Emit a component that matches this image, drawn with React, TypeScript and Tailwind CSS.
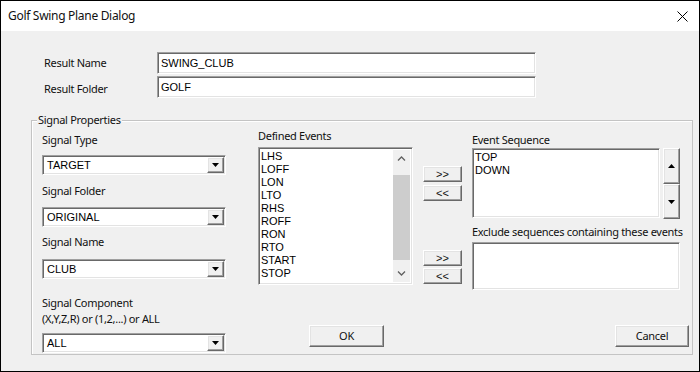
import React from "react";

const sunken =
  "bg-white border border-t-[#a0a0a0] border-l-[#a0a0a0] border-r-white border-b-white shadow-[inset_1px_1px_0_#696969,inset_-1px_-1px_0_#e3e3e3]";
const raised =
  "bg-[#f0f0f0] border border-t-white border-l-white border-r-[#696969] border-b-[#696969] shadow-[inset_-1px_-1px_0_#a0a0a0,inset_1px_1px_0_#e3e3e3]";
const field = "font-['Liberation_Sans',Arial,sans-serif] text-[11px] tracking-normal text-black";

function TriDown() {
  return (
    <svg width="7" height="4" viewBox="0 0 7 4">
      <path d="M0 0h7L3.5 4z" fill="#000" />
    </svg>
  );
}

function TriUp() {
  return (
    <svg width="7" height="4" viewBox="0 0 7 4">
      <path d="M0 4h7L3.5 0z" fill="#000" />
    </svg>
  );
}

function Combo({ value }: { value: string }) {
  return (
    <div className={`${sunken} flex h-[20px] w-[184px] items-center`}>
      <span className={`${field} flex-1 pl-[4px] leading-[16px]`}>{value}</span>
      <div className={`${raised} mr-[1px] flex h-[16px] w-[17px] items-center justify-center`}>
        <TriDown />
      </div>
    </div>
  );
}

function Btn({ label, w, h }: { label: string; w: string; h: string }) {
  return (
    <div className={`${raised} flex items-center justify-center ${w} ${h} text-[11px]`}>
      {label}
    </div>
  );
}

function Chevron({ up }: { up?: boolean }) {
  return (
    <svg width="9" height="5" viewBox="0 0 9 5">
      <path d={up ? "M1 4.5L4.5 1L8 4.5" : "M1 0.5L4.5 4L8 0.5"} stroke="#606060" strokeWidth="1.3" fill="none" />
    </svg>
  );
}

export default function App() {
  const events = ["LHS", "LOFF", "LON", "LTO", "RHS", "ROFF", "RON", "RTO", "START", "STOP", "TOP"];

  return (
    <div className="flex h-[372px] w-[700px] flex-col overflow-hidden border border-black bg-[#f0f0f0] font-['Noto_Sans',sans-serif] text-[11px] tracking-[-0.3px] text-[#111]">
      {/* TITLE BAR */}
      <div className="flex h-[30px] shrink-0 items-center justify-between bg-white pl-[7px] pr-[11px]">
        <span className="text-[12px]">Golf Swing Plane Dialog</span>
        <svg width="11" height="11" viewBox="0 0 11 11">
          <path d="M0.5 0.5L10.5 10.5M10.5 0.5L0.5 10.5" stroke="#000" strokeWidth="1" />
        </svg>
      </div>

      {/* CLIENT */}
      <div className="flex flex-col pt-[21px]">
        <div className="flex items-center pl-[43px]">
          <span className="w-[113px]">Result Name</span>
          <div className={`${sunken} flex h-[22px] w-[379px] items-center pl-[3px]`}>
            <span className={field}>SWING_CLUB</span>
          </div>
        </div>
        <div className="mt-[2px] flex items-start pl-[43px]">
          <span className="mt-[5px] w-[113px]">Result Folder</span>
          <div className={`${sunken} flex h-[22px] w-[379px] items-start pl-[3px] pt-[2px]`}>
            <span className={field}>GOLF</span>
          </div>
        </div>

        {/* SIGNAL PROPERTIES */}
        <div className="relative ml-[30px] mt-[22px] h-[235px] w-[662px] border border-[#c4c4c4] shadow-[inset_1px_1px_0_#fff]">
          <span className="absolute left-[5px] top-[-9px] bg-[#f0f0f0] px-[1px] leading-[16px]">Signal Properties</span>

          <div className="flex items-start pl-[10px]">
            {/* left column */}
            <div className="flex w-[184px] shrink-0 flex-col pt-[11px]">
              <span className="h-[16px] leading-[16px]">Signal Type</span>
              <div className="mt-[7px]"><Combo value="TARGET" /></div>
              <span className="mt-[8px] h-[16px] leading-[16px]">Signal Folder</span>
              <div className="mt-[8px]"><Combo value="ORIGINAL" /></div>
              <span className="mt-[7px] h-[16px] leading-[16px]">Signal Name</span>
              <div className="mt-[9px]"><Combo value="CLUB" /></div>
              <span className="mt-[16px] leading-[16px]">Signal Component</span>
              <span className="leading-[16px]">(X,Y,Z,R) or (1,2,...) or ALL</span>
              <div className="mt-[6px]"><Combo value="ALL" /></div>
            </div>

            {/* defined events */}
            <div className="ml-[32px] flex w-[155px] shrink-0 flex-col pt-[7px]">
              <span className="h-[16px] leading-[16px]">Defined Events</span>
              <div className={`${sunken} mt-[3px] flex h-[138px] p-[2px]`}>
                <div className={`${field} flex-1 overflow-hidden leading-[13px]`}>
                  {events.map((e) => (
                    <div key={e}>{e}</div>
                  ))}
                </div>
                <div className="flex w-[17px] flex-col bg-[#f0f0f0]">
                  <div className="flex h-[17px] items-center justify-center"><Chevron up /></div>
                  <div className="flex-1">
                    <div className="mt-[8px] h-[85px] bg-[#cdcdcd]" />
                  </div>
                  <div className="flex h-[17px] items-center justify-center"><Chevron /></div>
                </div>
              </div>
              <div className="ml-[51px] mt-[40px]">
                <Btn label="OK" w="w-[75px]" h="h-[22px]" />
              </div>
            </div>

            {/* move buttons */}
            <div className="ml-[10px] flex w-[39px] shrink-0 flex-col pt-[45px] font-['Liberation_Sans',sans-serif] tracking-normal">
              <Btn label=">>" w="w-[39px]" h="h-[16px]" />
              <div className="mt-[3px]"><Btn label="<<" w="w-[39px]" h="h-[16px]" /></div>
              <div className="mt-[49px]"><Btn label=">>" w="w-[39px]" h="h-[16px]" /></div>
              <div className="mt-[2px]"><Btn label="<<" w="w-[39px]" h="h-[16px]" /></div>
            </div>

            {/* sequence */}
            <div className="ml-[10px] flex w-[208px] shrink-0 flex-col pt-[11px]">
              <span className="h-[16px] leading-[15px]">Event Sequence</span>
              <div className="flex">
                <div className={`${sunken} h-[70px] w-[188px] p-[2px] ${field} leading-[13px]`}>
                  <div>TOP</div>
                  <div>DOWN</div>
                </div>
                <div className="ml-[3px] flex flex-col">
                  <div className={`${raised} flex h-[36px] w-[17px] items-center justify-center`}><TriUp /></div>
                  <div className={`${raised} flex h-[35px] w-[17px] items-center justify-center`}><TriDown /></div>
                </div>
              </div>
              <span className="mt-[5px] h-[16px] whitespace-nowrap leading-[16px]">Exclude sequences containing these events</span>
              <div className={`${sunken} mt-[2px] h-[48px] w-[208px]`} />
              <div className="ml-[143px] mt-[35px]">
                <Btn label="Cancel" w="w-[74px]" h="h-[22px]" />
              </div>
            </div>
          </div>
        </div>
      </div>
    </div>
  );
}
